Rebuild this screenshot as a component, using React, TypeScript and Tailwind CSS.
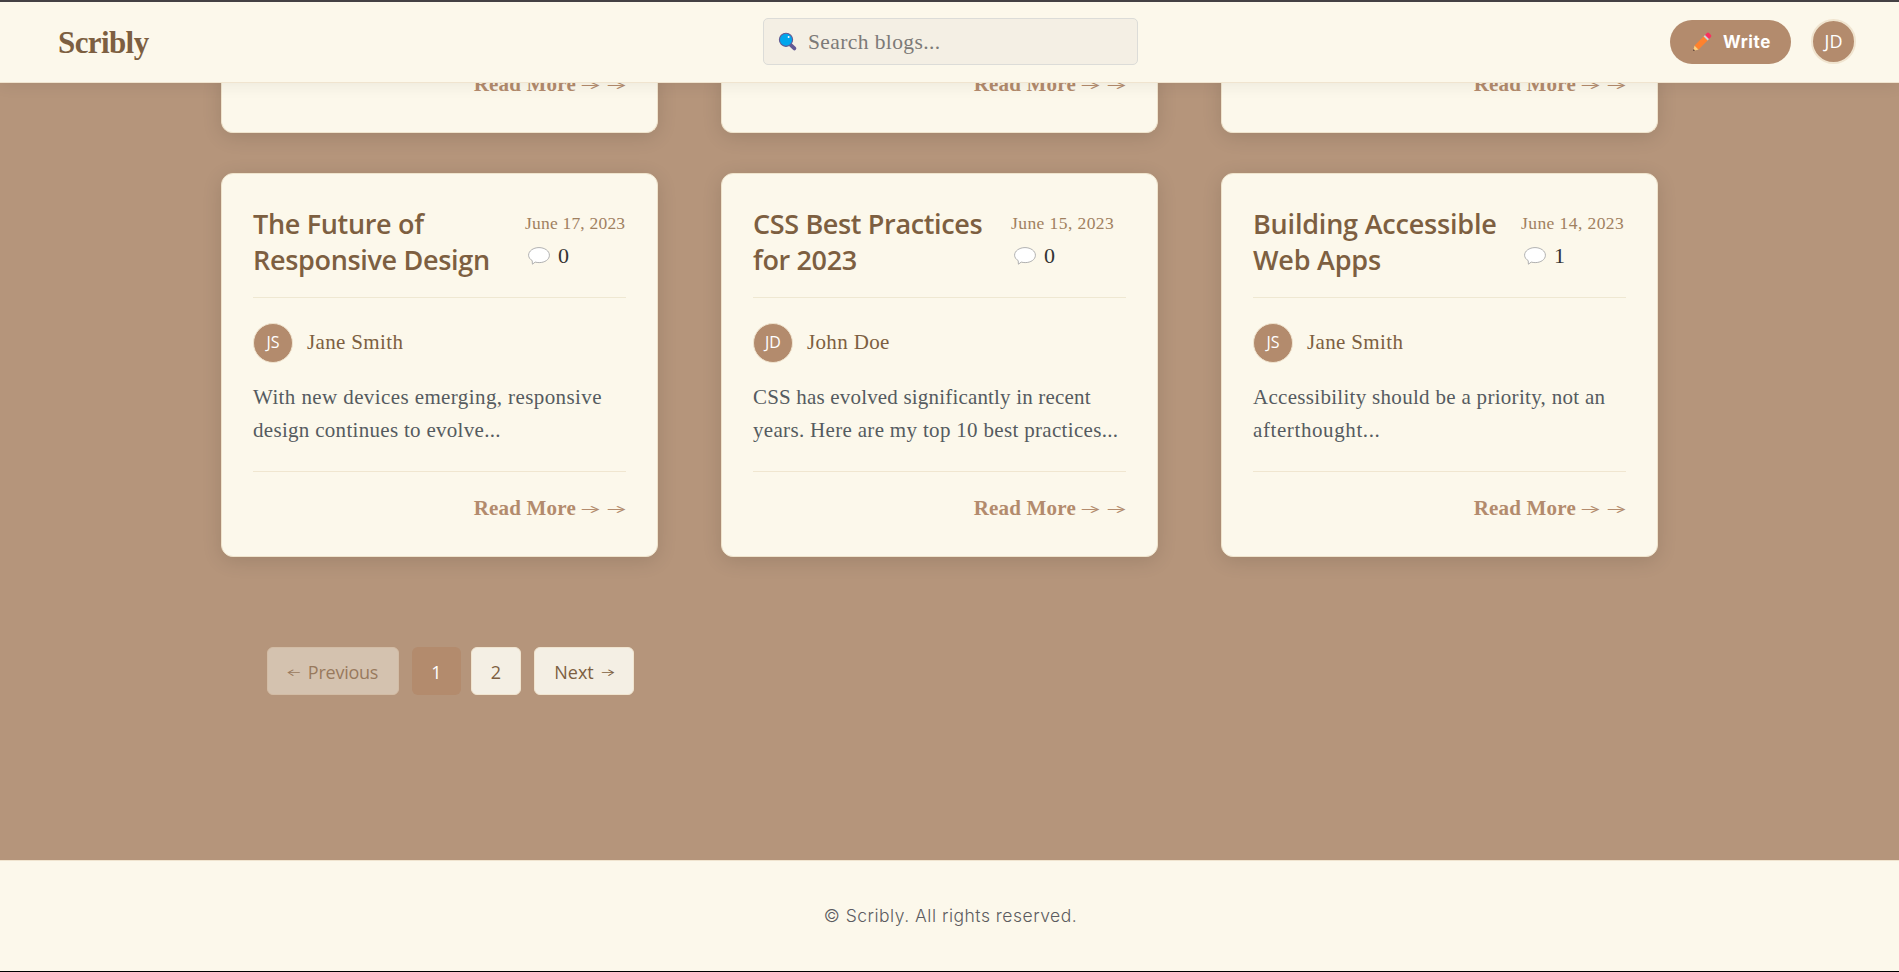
import React from "react";

type Line = { text: string; tracking: string };

type Post = {
  title: string[];
  date: string;
  comments: number;
  initials: string;
  author: string;
  excerpt: Line[];
  titleWidth: string;
  dateTracking: string;
};

const posts: Post[] = [
  {
    title: ["The Future of", "Responsive Design"],
    date: "June 17, 2023",
    comments: 0,
    initials: "JS",
    author: "Jane Smith",
    excerpt: [
      { text: "With new devices emerging, responsive", tracking: "tracking-[0.4px]" },
      { text: "design continues to evolve...", tracking: "tracking-[0.3px]" },
    ],
    titleWidth: "w-[272px] tracking-[-0.32px]",
    dateTracking: "tracking-[0.2px]",
  },
  {
    title: ["CSS Best Practices", "for 2023"],
    date: "June 15, 2023",
    comments: 0,
    initials: "JD",
    author: "John Doe",
    excerpt: [
      { text: "CSS has evolved significantly in recent", tracking: "tracking-[0.18px]" },
      { text: "years. Here are my top 10 best practices...", tracking: "tracking-[0.32px]" },
    ],
    titleWidth: "w-[258px] tracking-[-0.35px]",
    dateTracking: "tracking-[0.42px]",
  },
  {
    title: ["Building Accessible", "Web Apps"],
    date: "June 14, 2023",
    comments: 1,
    initials: "JS",
    author: "Jane Smith",
    excerpt: [
      { text: "Accessibility should be a priority, not an", tracking: "tracking-[0.3px]" },
      { text: "afterthought...", tracking: "tracking-[0.6px]" },
    ],
    titleWidth: "w-[268px] tracking-[-0.2px]",
    dateTracking: "tracking-[0.42px]",
  },
];

const serif = "font-['Liberation_Serif',serif]";
const sans = "font-['Open_Sans',sans-serif]";
const inter = "font-['Inter',sans-serif]";

function SearchIcon() {
  return (
    <svg width="20" height="20" viewBox="0 0 20 20" className="shrink-0">
      <path d="M12.6 12.8 L16.4 16.4" stroke="#635994" strokeWidth="3.8" strokeLinecap="round" />
      <circle cx="8" cy="7.8" r="6.6" fill="#00a6ed" stroke="#635994" strokeWidth="1.1" />
      <circle cx="10.6" cy="5" r="1" fill="#fff" />
    </svg>
  );
}

function PencilIcon() {
  return (
    <svg width="20" height="20" viewBox="0 0 20 20" className="shrink-0">
      <path d="M1 19 L2.6 13.4 L6.6 17.4 Z" fill="#ffce7c" />
      <path d="M1 19 L1.6 17 L3 18.4 Z" fill="#402a32" />
      <path d="M2.6 13.4 L11.8 4.2 L15.8 8.2 L6.6 17.4 Z" fill="#ff822d" />
      <path d="M11.6 4.4 L13.2 2.8 L17.2 6.8 L15.6 8.4 Z" fill="#d3d3d3" />
      <path d="M13 3 L15 1 Q16 .2 17 1 L19 3 Q19.8 4 19 5 L17 7 Z" fill="#f8315f" />
    </svg>
  );
}

function BubbleIcon() {
  return (
    <svg width="22" height="18" viewBox="0 0 22 18" className="shrink-0">
      <path
        d="M11 .6 C16.8 .6 21.4 4 21.4 8.2 C21.4 12.6 16.8 15.6 11.2 15.6 C9.8 15.6 8.4 15.4 7.2 15.1 L4.4 17.2 L4.2 13.6 C2 12.4 .6 10.4 .6 8.2 C.6 4 5.2 .6 11 .6 Z"
        fill="#fff"
        stroke="#b0b0b0"
        strokeWidth="1"
      />
    </svg>
  );
}

function LongArrow() {
  return (
    <span className="flex w-5 justify-center">
      <span className={`${inter} inline-block scale-x-[2.2] text-[11px] leading-5`}>→</span>
    </span>
  );
}

function ReadMore() {
  return (
    <div className="flex h-6 items-start justify-end text-[#b38b6d]">
      <span className={`${serif} text-[21px] leading-6 font-bold tracking-[0.2px]`}>Read More</span>
      <div className="mt-[3px] ml-1 flex gap-1.5">
        <LongArrow />
        <LongArrow />
      </div>
    </div>
  );
}

function Avatar({ initials }: { initials: string }) {
  return (
    <div
      className={`${sans} flex size-10 items-center justify-center rounded-full border border-[#f0e4cf] bg-[#b38b6d] pb-0.5 text-[16px] leading-none text-white`}
    >
      {initials}
    </div>
  );
}

const cardBase = "rounded-xl border border-[#efe4cd] bg-[#fcf8eb] shadow-[0_4px_20px_rgba(0,0,0,0.12)]";

function Card({ post }: { post: Post }) {
  return (
    <article className={`${cardBase} flex h-96 w-[437px] flex-col px-[31px] pt-[31px]`}>
      <div className="flex h-[93px] border-b border-[#efe8d2]">
        <h2 className={`${sans} ${post.titleWidth} mt-px shrink-0 text-[27px] leading-[36.4px] font-semibold whitespace-nowrap text-[#7d5f41]`}>
          {post.title.map((line) => (
            <span key={line} className="block">
              {line}
            </span>
          ))}
        </h2>
        <div className="flex flex-col whitespace-nowrap">
          <span className={`${serif} ${post.dateTracking} mt-1.5 text-[17.5px] leading-6 text-[#a08060]`}>{post.date}</span>
          <div className="mt-[9px] ml-[3px] flex h-6 items-center gap-2">
            <BubbleIcon />
            <span className={`${serif} text-[22px] leading-6 text-[#333]`}>{post.comments}</span>
          </div>
        </div>
      </div>
      <div className="mt-[25px] flex h-10 items-center gap-[14px]">
        <Avatar initials={post.initials} />
        <span className={`${serif} pb-0.5 text-[21px] leading-6 tracking-[0.35px] text-[#7d5f41]`}>{post.author}</span>
      </div>
      <p className={`${serif} mt-[18px] text-[21px] leading-[33px] whitespace-nowrap text-[#555b60]`}>
        {post.excerpt.map((line) => (
          <span key={line.text} className={`block ${line.tracking}`}>
            {line.text}
          </span>
        ))}
      </p>
      <div className="mt-6 border-t border-[#f0e6d0] pt-6">
        <ReadMore />
      </div>
    </article>
  );
}

export default function App() {
  return (
    <div className="flex h-[972px] w-[1899px] flex-col overflow-hidden bg-[#b5957b]">
      <header className="relative z-10 flex h-[83px] shrink-0 items-start border-t-2 border-b border-t-[#444144] border-b-[#f0e4cf] bg-[#fcf8eb] pr-[43px] pl-[58px] shadow-[0_2px_16px_rgba(0,0,0,0.07)]">
        <div className={`${serif} mt-[23px] w-[705px] text-[31px] leading-9 font-bold tracking-[-0.6px] text-[#7d5f41]`}>Scribly</div>
        <div className="mt-4 flex h-[47px] w-[375px] items-center rounded-[5px] border border-[#dcdcd8] bg-[#f4efe4] pl-3.5">
          <SearchIcon />
          <span className={`${serif} ml-[10px] text-[21.5px] leading-6 tracking-[0.4px] text-[#7c7a78]`}>Search blogs...</span>
        </div>
        <button className="mt-[18px] ml-auto flex h-11 w-[121px] items-center rounded-full bg-[#b38b6d] pl-[22px] text-white">
          <PencilIcon />
          <span className={`${inter} ml-[11px] text-[17px] leading-6 font-bold tracking-[0.6px]`}>Write</span>
        </button>
        <div
          className={`${sans} mt-[17px] ml-5 flex size-[45px] items-center justify-center rounded-full border-2 border-[#f0e4cf] bg-[#b38b6d] pb-0.5 text-[18px] leading-none text-white`}
        >
          JD
        </div>
      </header>

      <main className="flex h-[777px] shrink-0 flex-col pl-[221px]">
        <div className="-mt-3 flex gap-[63px]">
          {posts.map((post) => (
            <div key={post.title[0]} className={`${cardBase} h-[62px] w-[437px] rounded-t-none border-t-0 px-[31px] pt-px`}>
              <ReadMore />
            </div>
          ))}
        </div>
        <div className="mt-10 flex gap-[63px]">
          {posts.map((post) => (
            <Card key={post.title[0]} post={post} />
          ))}
        </div>
        <nav className={`${sans} mt-[90px] ml-[46px] flex h-12 text-[18px] text-[#7d5f41]`}>
          <button className="flex w-[132px] items-center justify-center gap-2 rounded-md border border-[#f0e4cf] bg-[#f4efe4] pt-0.5 opacity-50">
            <span className={`${inter} inline-block w-3 scale-x-[1.7] text-center text-[10px]`}>←</span>
            <span className="tracking-[-0.25px]">Previous</span>
          </button>
          <button className="ml-[13px] w-[49px] rounded-md bg-[#b38b6d] pt-0.5 text-white">1</button>
          <button className="ml-[10px] w-[50px] rounded-md border border-[#f0e4cf] bg-[#f4efe4] pt-0.5">2</button>
          <button className="ml-[13px] flex w-[100px] items-center justify-center gap-2 rounded-md border border-[#f0e4cf] bg-[#f4efe4] pt-0.5">
            <span>Next</span>
            <span className={`${inter} inline-block w-3 scale-x-[1.7] text-center text-[10px]`}>→</span>
          </button>
        </nav>
      </main>

      <footer className={`${inter} flex h-28 shrink-0 items-center justify-center border-t border-b border-t-[#f0e4cf] border-b-black bg-[#fcf8eb] pl-0.5 text-[17.5px] font-light tracking-[0.5px] text-[#5c5c60]`}>
        © Scribly. All rights reserved.
      </footer>
    </div>
  );
}
